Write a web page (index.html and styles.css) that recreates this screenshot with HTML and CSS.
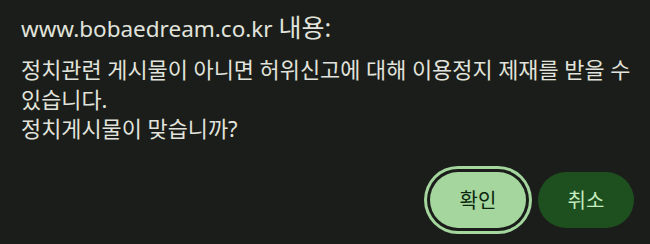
FILE: index.html
```html
<!DOCTYPE html>
<html lang="ko">
<head>
<meta charset="utf-8">
<title>www.bobaedream.co.kr 내용</title>
<link rel="stylesheet" href="styles.css">
</head>
<body>
<div class="dialog">
  <div class="title">www.bobaedream.co.kr <span class="title-ko">내용:</span></div>
  <div class="message">정치관련 게시물이 아니면 허위신고에 대해 이용정지 제재를 받을 수 있습니다.<br>정치게시물이 맞습니까?</div>
  <div class="actions">
    <button class="btn btn-primary">확인</button>
    <button class="btn btn-secondary">취소</button>
  </div>
</div>
</body>
</html>
```
FILE: styles.css
```css
html, body {
  margin: 0;
  padding: 0;
  background: #1a1d19;
}
body {
  width: 650px;
  height: 244px;
  overflow: hidden;
  font-family: "Noto Sans", "Noto Sans CJK KR", sans-serif;
  color: #e1e3dc;
}
.dialog {
  padding: 12px 16px 0 21px;
}
.title {
  font-size: 22.5px;
  line-height: 30px;
  height: 30px;
}
.title-ko {
  font-size: 25px;
}
.message {
  margin-top: 13px;
  font-size: 21.9px;
  line-height: 29.5px;
  word-break: keep-all;
}
.actions {
  display: flex;
  justify-content: flex-end;
  gap: 12px;
  margin-top: 28px;
}
.btn {
  width: 96px;
  height: 56px;
  border: none;
  border-radius: 28px;
  font-family: "Noto Sans", "Noto Sans CJK KR", sans-serif;
  font-size: 20px;
  padding: 0;
}
.btn-primary {
  background: #a4d69e;
  color: #0c260c;
  box-shadow: 0 0 0 3px #1a1d19, 0 0 0 6px #a4d69e;
}
.btn-secondary {
  background: #1e4f1f;
  color: #c6ecc0;
}
```
